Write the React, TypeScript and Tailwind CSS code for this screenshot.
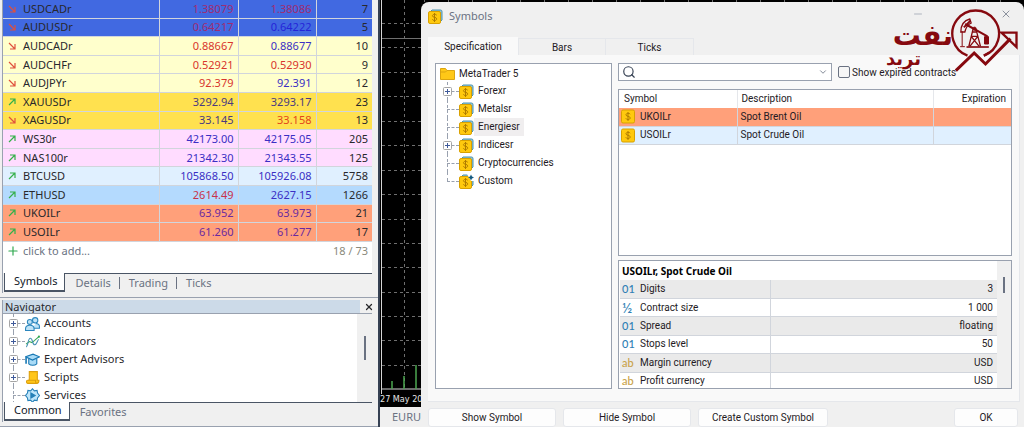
import { ChevronDown, Minus, Plus, Search, X } from "lucide-react";
import type { ReactNode } from "react";

type Quote = {
  symbol: string;
  bid: string;
  ask: string;
  spread: string;
  up?: boolean;
  row: string;
  bidColor: string;
  askColor: string;
};

const BLUE = "text-[#3a2fc4]";
const RED = "text-[#d8352c]";
const PURPLE = "text-[#6a2aa0]";

const quotes: Quote[] = [
  { symbol: "USDCADr", bid: "1.38079", ask: "1.38086", spread: "7", row: "bg-[#4169e1]", bidColor: "text-[#a02c72]", askColor: "text-[#a02c72]" },
  { symbol: "AUDUSDr", bid: "0.64217", ask: "0.64222", spread: "5", row: "bg-[#4169e1]", bidColor: "text-[#a02c72]", askColor: "text-[#2424d8]" },
  { symbol: "AUDCADr", bid: "0.88667", ask: "0.88677", spread: "10", row: "bg-[#ffffcc]", bidColor: RED, askColor: BLUE },
  { symbol: "AUDCHFr", bid: "0.52921", ask: "0.52930", spread: "9", row: "bg-[#ffffcc]", bidColor: RED, askColor: RED },
  { symbol: "AUDJPYr", bid: "92.379", ask: "92.391", spread: "12", row: "bg-[#ffffcc]", bidColor: RED, askColor: BLUE },
  { symbol: "XAUUSDr", bid: "3292.94", ask: "3293.17", spread: "23", up: true, row: "bg-[#ffe14f]", bidColor: "text-[#4a3a80]", askColor: "text-[#4a3a80]" },
  { symbol: "XAGUSDr", bid: "33.145", ask: "33.158", spread: "13", row: "bg-[#ffe14f]", bidColor: "text-[#4a3a80]", askColor: "text-[#e2461a]" },
  { symbol: "WS30r", bid: "42173.00", ask: "42175.05", spread: "205", up: true, row: "bg-[#ffdcff]", bidColor: BLUE, askColor: BLUE },
  { symbol: "NAS100r", bid: "21342.30", ask: "21343.55", spread: "125", up: true, row: "bg-[#ffdcff]", bidColor: BLUE, askColor: BLUE },
  { symbol: "BTCUSD", bid: "105868.50", ask: "105926.08", spread: "5758", up: true, row: "bg-[#e0f0ff]", bidColor: BLUE, askColor: BLUE },
  { symbol: "ETHUSD", bid: "2614.49", ask: "2627.15", spread: "1266", up: true, row: "bg-[#b4dafe]", bidColor: "text-[#c8324a]", askColor: BLUE },
  { symbol: "UKOILr", bid: "63.952", ask: "63.973", spread: "21", up: true, row: "bg-[#ffa07a]", bidColor: PURPLE, askColor: PURPLE },
  { symbol: "USOILr", bid: "61.260", ask: "61.277", spread: "17", up: true, row: "bg-[#ffa07a]", bidColor: PURPLE, askColor: PURPLE },
];

const details = [
  { kind: "01", label: "Digits", value: "3" },
  { kind: "½", label: "Contract size", value: "1 000" },
  { kind: "01", label: "Spread", value: "floating" },
  { kind: "01", label: "Stops level", value: "50" },
  { kind: "ab", label: "Margin currency", value: "USD" },
  { kind: "ab", label: "Profit currency", value: "USD" },
];

const gridLines = [23, 47, 72, 96, 121, 145, 170, 194, 219, 243, 267, 292, 316, 340, 365];

function TickArrow({ up }: { up?: boolean }) {
  return (
    <svg viewBox="0 0 8 8" className="size-2" fill="none" strokeWidth="1.2">
      {up ? (
        <path d="M1 7 7 1M2 1h5v5" stroke="#35b04a" />
      ) : (
        <path d="m1 1 6 6M2 7h5V2" stroke="#e0503c" />
      )}
    </svg>
  );
}

function CoinIcon({ stacked, custom }: { stacked?: boolean; custom?: boolean }) {
  return (
    <svg viewBox="0 0 15 15" className="size-[15px] shrink-0" fill="none">
      {stacked && (
        <path d="M4 1h8.5A1.5 1.5 0 0 1 14 2.500V11l-2 2V3H2Z" fill="#8fc4d8" stroke="#4d93ad" />
      )}
      <rect x="0.500" y={stacked ? 2.500 : 1} width={stacked ? 12 : 13} height={stacked ? 12 : 13} rx="1.500" fill="#ffc90e" stroke="#d9a100" />
      <g transform={stacked ? "translate(-0.500 1)" : ""} stroke="#b07c00">
        <path d="M9.200 5.200C8.800 4.500 8 4.300 7 4.300c-1.200 0-2 .6-2 1.500 0 2.100 4.200 1 4.200 3.100 0 1-.9 1.600-2.200 1.600-1.100 0-1.900-.4-2.200-1.200M7 3v9" />
      </g>
      {custom && (
        <>
          <path d="M8 0h7v7h-3Z" fill="#fff" />
          <path d="m12 .5 1 2 2 1-2 1-1 2-1-2-2-1 2-1Z" fill="#155a80" />
        </>
      )}
    </svg>
  );
}

function Expander() {
  return (
    <svg viewBox="0 0 9 9" className="relative size-[9px] shrink-0" fill="none">
      <rect x="0.500" y="0.500" width="8" height="8" rx="1" fill="#fff" stroke="#a5a5a5" />
      <path d="M2 4.500h5M4.500 2v5" stroke="#3f5a9a" />
    </svg>
  );
}

function TreeItem({ icon, label, expandable, selected, last }: { icon: ReactNode; label: string; expandable?: boolean; selected?: boolean; last?: boolean }) {
  return (
    <li className="relative flex h-[18px] items-center">
      <span className={`absolute left-1 top-0 border-l border-dashed border-gray-400 ${last ? "h-1/2" : "h-full"}`} />
      <span className="absolute left-1 top-1/2 w-3 border-t border-dashed border-gray-400" />
      <span className="w-4">{expandable && <Expander />}</span>
      {icon}
      <span className={`whitespace-nowrap px-1 leading-[18px] ${selected ? "bg-[#f0eeef]" : ""}`}>{label}</span>
    </li>
  );
}

function AccountsIcon() {
  return (
    <svg viewBox="0 0 14 14" className="size-[15px] shrink-0" fill="#bfe3f7" stroke="#2b86bd">
      <circle cx="9.500" cy="4" r="2.500" />
      <path d="M7 11.500h6.500V10c0-2-1.500-3-3.500-3" />
      <circle cx="4.500" cy="5.500" r="2.300" />
      <path d="M.5 13.500V12c0-2.200 1.600-3.300 4-3.300s4 1.100 4 3.300v1.500Z" />
    </svg>
  );
}

function IndicatorsIcon() {
  return (
    <svg viewBox="0 0 14 14" className="size-[15px] shrink-0" fill="none">
      <path d="M1 9.500 4 7l2.500 1L9 6l4-3.500" stroke="#35a855" />
      <path d="M1 12c2 0 1.500-8 4-8s1.500 6 4 6 2-4 4-5" stroke="#4a92b5" />
      <circle cx="13" cy="2.500" r="1" fill="#35a855" />
    </svg>
  );
}

function ExpertIcon() {
  return (
    <svg viewBox="0 0 14 14" className="size-[15px] shrink-0" fill="#a9dbf7" stroke="#1878b4">
      <path d="M3.500 6v5c2 1.800 5.500 1.800 7.500 0V6" />
      <path d="m.5 4.500 7-2.500 6 2.500-6.500 3Z" />
      <path d="M1 5v6" strokeWidth="1.500" />
    </svg>
  );
}

function ScriptIcon() {
  return (
    <svg viewBox="0 0 14 14" className="size-[15px] shrink-0" fill="#ffc61a" stroke="#dd9f0c">
      <path d="M4 1.500h7.500v8h1.500c0 2-.5 3-2 3H2.500c-1.500 0-1.500-3 0-3H4Z" />
      <path d="M3 9.500h7c-.5 1.500 0 3 1 3" />
    </svg>
  );
}

function ServicesIcon() {
  return (
    <svg viewBox="0 0 14 14" className="size-[15px] shrink-0" fill="#bfe6fb" stroke="#2680b8">
      <path d="m7 .7 1.700 2 2.600-.4.400 2.500L13.500 7l-1.800 2.200-.4 2.500-2.600-.4L7 13.300l-1.700-2-2.600.4-.4-2.500L.5 7l1.800-2.200.4-2.500 2.600.4Z" />
      <path d="m5.500 4.700 4 2.300-4 2.300Z" fill="#2680b8" />
    </svg>
  );
}

function MarketWatch() {
  return (
    <section className="border-b border-gray-400 pb-1">
      <div className="ml-0.5 mr-1.5 border-l border-gray-400 bg-white">
        <table className="h-[242px] w-full table-fixed border-collapse">
          <colgroup>
            <col />
            <col className="w-[79px]" />
            <col className="w-[78px]" />
            <col className="w-14" />
          </colgroup>
          <tbody>
            {quotes.map((q) => (
              <tr key={q.symbol} className={`${q.row} border-b border-gray-300`}>
                <th className="border-r border-gray-300 p-0 pl-[5px] text-left font-normal">
                  <span className="flex items-center gap-[7px] leading-4">
                    <TickArrow up={q.up} />
                    {q.symbol}
                  </span>
                </th>
                <td className={`border-r border-gray-300 p-0 pr-1 text-right leading-4 ${q.bidColor}`}>{q.bid}</td>
                <td className={`border-r border-gray-300 p-0 pr-1 text-right leading-4 ${q.askColor}`}>{q.ask}</td>
                <td className="p-0 pr-1 text-right leading-4">{q.spread}</td>
              </tr>
            ))}
          </tbody>
        </table>
        <div className="flex h-[31px] items-start justify-between pr-1 pt-px leading-4 text-gray-500">
          <button type="button" className="flex items-center gap-[3px] pl-[3px]">
            <Plus className="size-3.5 text-[#2fa84f]" strokeWidth={2} />
            click to add...
          </button>
          <span className="text-[#8a8a7c]">18 / 73</span>
        </div>
      </div>
      <BottomTabs tabs={["Symbols", "Details", "Trading", "Ticks"]} />
    </section>
  );
}

function BottomTabs({ tabs }: { tabs: string[] }) {
  const [current, ...others] = tabs;
  return (
    <nav className="ml-0.5 mr-1.5 flex h-5 items-start border-l border-gray-400 text-gray-500">
      <button type="button" className="ml-px h-[19px] border-x border-b-2 border-gray-600 bg-white pl-[9px] pr-[7px] text-gray-900">
        {current}
      </button>
      <div className="flex h-[19px] flex-1 items-center border-t border-gray-600">
        {others.map((tab) => (
          <button key={tab} type="button" className="border-l border-gray-500 pl-[9px] pr-2 leading-3 first:border-transparent">
            {tab}
          </button>
        ))}
      </div>
    </nav>
  );
}

function Navigator() {
  return (
    <section className="flex flex-1 flex-col border-b border-gray-400">
      <header className="mt-0.5 flex h-[13px] items-center justify-between pl-0.5 pr-1">
        <h2 className="h-[13px] flex-1 border-l border-gray-400 bg-[#ccdae8] pl-0.5 leading-[13px]">Navigator</h2>
        <button type="button" aria-label="Close navigator" className="pl-1">
          <X className="size-2.5" strokeWidth={3} />
        </button>
      </header>
      <div className="ml-0.5 mr-1.5 flex h-[89px] overflow-hidden border-l border-t border-gray-400 bg-white">
        <ul className="flex-1 pl-1.5">
          <TreeItem expandable icon={<AccountsIcon />} label="Accounts" />
          <TreeItem expandable icon={<IndicatorsIcon />} label="Indicators" />
          <TreeItem expandable icon={<ExpertIcon />} label="Expert Advisors" />
          <TreeItem expandable icon={<ScriptIcon />} label="Scripts" />
          <TreeItem icon={<ServicesIcon />} label="Services" />
        </ul>
        <div className="flex w-[15px] justify-center bg-[#f0f0f0] pt-[22px]">
          <span className="h-6 w-0.5 bg-gray-500" />
        </div>
      </div>
      <BottomTabs tabs={["Common", "Favorites"]} />
    </section>
  );
}

function Chart() {
  return (
    <div className="absolute inset-0 flex flex-col border-l-2 border-gray-700 bg-black">
      <svg className="min-h-0 w-full flex-1" stroke="#6f6f6f">
        <path d="M1.500 0V389H660M1.500 389v5" fill="none" stroke="#d5d5d5" />
        <path d="M24.500 0V389" strokeDasharray="3 3" />
        {gridLines.map((y) => (
          <path key={y} d={`M2 ${y}.5H660`} strokeDasharray="3 3" />
        ))}
        <path d="M44 1H660" strokeWidth="2" strokeDasharray="1 23" />
        <path d="M2 38.500H660" />
        <path d="M12 381v8M24 376v13M36 365v24" stroke="#4ca650" strokeWidth="1.500" />
        <text x="0" y="402" fill="#e5e5e5" stroke="none" className="font-['DejaVu_Sans_Condensed'] text-[9px]">27 May 2025</text>
      </svg>
      <div className="h-5 bg-[#f0f0f0] pl-3 text-[11px] leading-5 text-gray-500">EURUSDr,H1</div>
    </div>
  );
}

function BrandLogo() {
  return (
    <div className="pointer-events-none absolute right-1.5 top-1 flex items-start text-[#86090f]">
      <div dir="rtl" lang="fa" className="pt-4 font-['DejaVu_Sans'] font-bold">
        <p className="text-[28px] leading-7">نفت</p>
        <p className="pr-8 text-[18px] leading-[18px]">ترید</p>
      </div>
      <svg viewBox="270 14 206 201" className="-ml-1 h-[67px] w-[69px]" fill="none" stroke="currentColor" strokeWidth="7">
        <path d="M325 163A70 70 0 1 1 374 163" />
        <path d="M374 163a70 70 0 0 0 16-10" />
        <path d="m290 208 55-53 34 33 75-76" strokeWidth="9" />
        <path d="M427 94h45v43Z" strokeWidth="7" />
        <path d="m314 78 20-20M318 68l67 37" strokeWidth="6" />
        <path d="M305 92c0-20 8-34 27-39l4 12c-12 5-16 15-19 27Z" strokeWidth="4" />
        <path d="M309 90v44M303 136h14" strokeWidth="3" />
        <path d="m342 82-13 53M350 82l14 53M336 105l24 30M356 105l-24 30M337 105h20M340 92h14" strokeWidth="4" />
        <path d="M322 137h67" strokeWidth="5" />
        <path d="M376 106h12v22h-12Z" fill="currentColor" strokeWidth="3" />
        <circle cx="346" cy="82" r="5" fill="currentColor" strokeWidth="2" />
      </svg>
    </div>
  );
}

function SymbolTree() {
  return (
    <div className="w-[177px] shrink-0 border border-gray-400 bg-white pl-1 text-[#241a24]">
      <div className="flex h-[18px] items-center gap-1 pt-px">
        <svg viewBox="0 0 15 12" className="h-3 w-[15px]" fill="#ffc817" stroke="#dca510">
          <path d="M.5 11.500V.5h5l1.500 2h7.500v9Z" />
          <path d="M.5 4h5L7 2.500" fill="none" />
        </svg>
        MetaTrader 5
      </div>
      <ul className="pl-[3px]">
        <TreeItem expandable icon={<CoinIcon stacked />} label="Forexr" />
        <TreeItem icon={<CoinIcon stacked />} label="Metalsr" />
        <TreeItem selected icon={<CoinIcon stacked />} label="Energiesr" />
        <TreeItem expandable icon={<CoinIcon stacked />} label="Indicesr" />
        <TreeItem icon={<CoinIcon stacked />} label="Cryptocurrencies" />
        <TreeItem last icon={<CoinIcon stacked custom />} label="Custom" />
      </ul>
    </div>
  );
}

function SymbolTable() {
  return (
    <div className="mt-2 h-[167px] border border-gray-400 bg-white">
      <table className="w-full table-fixed border-collapse text-left leading-4">
        <colgroup>
          <col className="w-[118px]" />
          <col />
          <col className="w-[78px]" />
        </colgroup>
        <thead>
          <tr className="h-[18px]">
            <th className="border-r border-gray-200 p-0 pl-[5px] font-normal">Symbol</th>
            <th className="border-r border-gray-200 p-0 pl-1 font-normal">Description</th>
            <th className="p-0 pr-[5px] text-right font-normal">Expiration</th>
          </tr>
        </thead>
        <tbody>
          <tr className="h-[18px] border-b border-gray-300 bg-[#ffa07a]">
            <td className="border-r border-gray-300 p-0 pl-0.5">
              <span className="flex items-center gap-1"><CoinIcon />UKOILr</span>
            </td>
            <td className="border-r border-gray-300 p-0 pl-[3px]">Spot Brent Oil</td>
            <td />
          </tr>
          <tr className="h-[18px] border-b border-gray-300 bg-[#e0f0ff]">
            <td className="border-r border-gray-300 p-0 pl-0.5">
              <span className="flex items-center gap-1"><CoinIcon />USOILr</span>
            </td>
            <td className="border-r border-gray-300 p-0 pl-[3px]">Spot Crude Oil</td>
            <td />
          </tr>
        </tbody>
      </table>
    </div>
  );
}

function SymbolDetails() {
  return (
    <div className="mt-1 flex min-h-0 flex-1 overflow-hidden border border-gray-400 bg-white">
      <div className="flex-1 pl-px">
        <table className="h-[130px] w-full table-fixed border-collapse text-left leading-4">
          <colgroup>
            <col className="w-[150px]" />
            <col />
          </colgroup>
          <thead>
            <tr className="h-[19px]">
              <th colSpan={2} className="p-0 pl-0.5 font-['Noto_Sans'] font-bold text-black">USOILr, Spot Crude Oil</th>
            </tr>
          </thead>
          <tbody>
            {details.map((d) => (
              <tr key={d.label} className="h-[18px] border-b border-gray-300 odd:bg-[#eaeaea]">
                <th className="border-r border-gray-300 p-0 font-normal">
                  <span className="flex items-center">
                    <span className={`w-5 pl-0.5 font-['Lato'] font-medium ${d.kind === "ab" ? "text-[#c9a24a]" : "text-[#2f7fb5]"} ${d.kind === "½" ? "text-[14px]" : "text-[11px]"}`}>{d.kind}</span>
                    {d.label}
                  </span>
                </th>
                <td className="p-0 pr-1 text-right">{d.value}</td>
              </tr>
            ))}
          </tbody>
        </table>
      </div>
      <div className="flex w-3.5 justify-center bg-[#f0f0f0] pt-4">
        <span className="h-4 w-0.5 bg-gray-500" />
      </div>
    </div>
  );
}

const buttonClass = "h-[19px] rounded-[3px] border border-gray-200 bg-[#fdfdfd] text-center";

function SymbolsDialog() {
  return (
    <div role="dialog" aria-label="Symbols" className="relative ml-[43px] mt-0.5 flex min-w-0 flex-1 flex-col rounded-t-lg bg-[#f0f0f0] pl-[7px] pr-1 font-['Roboto',sans-serif] text-[10px] text-[#241a24]">
      <header className="flex h-[35px] items-start justify-between pt-1.5 text-gray-500">
        <h1 className="flex items-center gap-1.5 font-['Noto_Sans'] text-[11px] leading-4">
          <CoinIcon stacked />
          Symbols
        </h1>
        <div className="flex items-center pr-2">
          <button type="button" aria-label="Minimize" className="mr-[76px]">
            <Minus className="size-3 text-gray-400" strokeWidth={1.5} />
          </button>
          <button type="button" aria-label="Close">
            <X className="size-3" strokeWidth={1.5} />
          </button>
        </div>
      </header>
      <nav className="flex h-[18px] items-end">
        <button type="button" className="h-full w-[90px] bg-[#f9f9f9]">Specification</button>
        <button type="button" className="h-[17px] w-[88px] border border-b-0 border-gray-200">Bars</button>
        <button type="button" className="h-[17px] w-[88px] border border-b-0 border-l-0 border-gray-200">Ticks</button>
      </nav>
      <div className="flex h-[347px] gap-[6px] border-b border-r border-gray-200 bg-[#f9f9f9] px-[7px] pb-3 pt-2">
        <SymbolTree />
        <div className="flex min-w-0 flex-1 flex-col">
          <div className="flex h-[18px] items-center">
            <div className="flex h-full w-[214px] items-center border border-gray-400 bg-white px-[3px]">
              <Search className="size-3.5 text-gray-700" strokeWidth={2} />
              <input type="text" aria-label="Search symbols" className="min-w-0 flex-1 outline-none" />
              <ChevronDown className="size-2.5 text-gray-500" />
            </div>
            <label className="ml-1.5 flex items-center gap-0.5 whitespace-nowrap">
              <input type="checkbox" className="size-3 appearance-none rounded-[2px] border border-gray-500 bg-[#f6f6f6]" />
              Show expired contracts
            </label>
          </div>
          <SymbolTable />
          <SymbolDetails />
        </div>
      </div>
      <footer className="flex gap-[7px] pt-1.5">
        <button type="button" className={`${buttonClass} w-32`}>Show Symbol</button>
        <button type="button" className={`${buttonClass} w-32`}>Hide Symbol</button>
        <button type="button" className={`${buttonClass} w-[130px]`}>Create Custom Symbol</button>
        <button type="button" className={`${buttonClass} ml-auto mr-0.5 w-16`}>OK</button>
      </footer>
      <BrandLogo />
    </div>
  );
}

export default function App() {
  return (
    <div className="flex h-screen overflow-hidden bg-[#f0f0f0] font-['Noto_Sans',sans-serif] text-[11px] text-[#28282c]">
      <aside className="flex w-[378px] shrink-0 flex-col">
        <MarketWatch />
        <Navigator />
      </aside>
      <main className="relative flex min-w-0 flex-1">
        <Chart />
        <SymbolsDialog />
      </main>
    </div>
  );
}
